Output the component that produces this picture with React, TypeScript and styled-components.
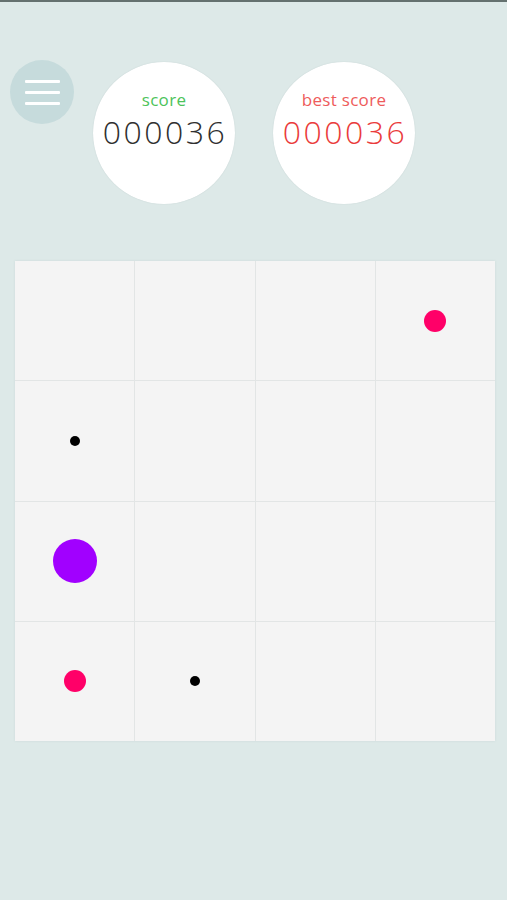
import styled, { createGlobalStyle } from "styled-components";

const Global = createGlobalStyle`
  html, body {
    margin: 0;
    padding: 0;
    background: #dde9e8;
    font-family: "Open Sans", "Noto Sans", sans-serif;
  }
`;

const Page = styled.div`
  min-height: 900px;
  border-top: 2px solid #64716f;
  box-sizing: border-box;
`;

const Header = styled.div`
  display: flex;
  align-items: flex-start;
  padding: 58px 0 0 10px;
`;

const MenuButton = styled.button`
  width: 64px;
  height: 64px;
  border-radius: 50%;
  border: none;
  background: #c6dbdc;
  display: flex;
  flex-direction: column;
  align-items: center;
  justify-content: center;
  gap: 8px;
  padding: 0;
  margin-right: 19px;
  cursor: pointer;

  span {
    display: block;
    width: 35px;
    height: 3px;
    background: #fff;
    border-radius: 1px;
  }
`;

const ScoreCircle = styled.div<{ $color: string; $numColor: string }>`
  width: 142px;
  height: 142px;
  margin-top: 2px;
  margin-right: 38px;
  border-radius: 50%;
  background: #fff;
  box-shadow: 0 0 1px rgba(120, 150, 150, 0.4);
  display: flex;
  flex-direction: column;
  align-items: center;
  padding-top: 27px;
  box-sizing: border-box;

  .label {
    color: ${(p) => p.$color};
    font-size: 17px;
    line-height: 22px;
    letter-spacing: 0.3px;
  }

  .value {
    color: ${(p) => p.$numColor};
    font-size: 32px;
    font-weight: 300;
    line-height: 42px;
    letter-spacing: 2.5px;
    margin-left: 2px;
  }
`;

const Board = styled.div`
  width: 480px;
  height: 480px;
  margin: 57px 0 0 15px;
  display: grid;
  grid-template-columns: repeat(4, 1fr);
  grid-template-rows: repeat(4, 1fr);
  gap: 1px;
  background: #e2e5e5;
  box-shadow: 0 0 2px rgba(200, 215, 215, 0.8);
`;

const Cell = styled.div`
  background: #f4f4f4;
  display: flex;
  align-items: center;
  justify-content: center;
`;

const Dot = styled.div<{ $size: number; $color: string }>`
  width: ${(p) => p.$size}px;
  height: ${(p) => p.$size}px;
  border-radius: 50%;
  background: ${(p) => p.$color};
`;

type Piece = { size: number; color: string } | null;

const PINK = "#ff0068";
const PURPLE = "#a100ff";
const BLACK = "#000";

const board: Piece[] = [
  null, null, null, { size: 22, color: PINK },
  { size: 10, color: BLACK }, null, null, null,
  { size: 44, color: PURPLE }, null, null, null,
  { size: 22, color: PINK }, { size: 10, color: BLACK }, null, null,
];

export default function App() {
  return (
    <>
      <Global />
      <Page>
        <Header>
          <MenuButton aria-label="menu">
            <span />
            <span />
            <span />
          </MenuButton>
          <ScoreCircle $color="#4cc35a" $numColor="#2f2f2f">
            <div className="label">score</div>
            <div className="value">000036</div>
          </ScoreCircle>
          <ScoreCircle $color="#ee5b5b" $numColor="#ea3b3b">
            <div className="label">best score</div>
            <div className="value">000036</div>
          </ScoreCircle>
        </Header>
        <Board>
          {board.map((p, i) => (
            <Cell key={i}>{p && <Dot $size={p.size} $color={p.color} />}</Cell>
          ))}
        </Board>
      </Page>
    </>
  );
}
